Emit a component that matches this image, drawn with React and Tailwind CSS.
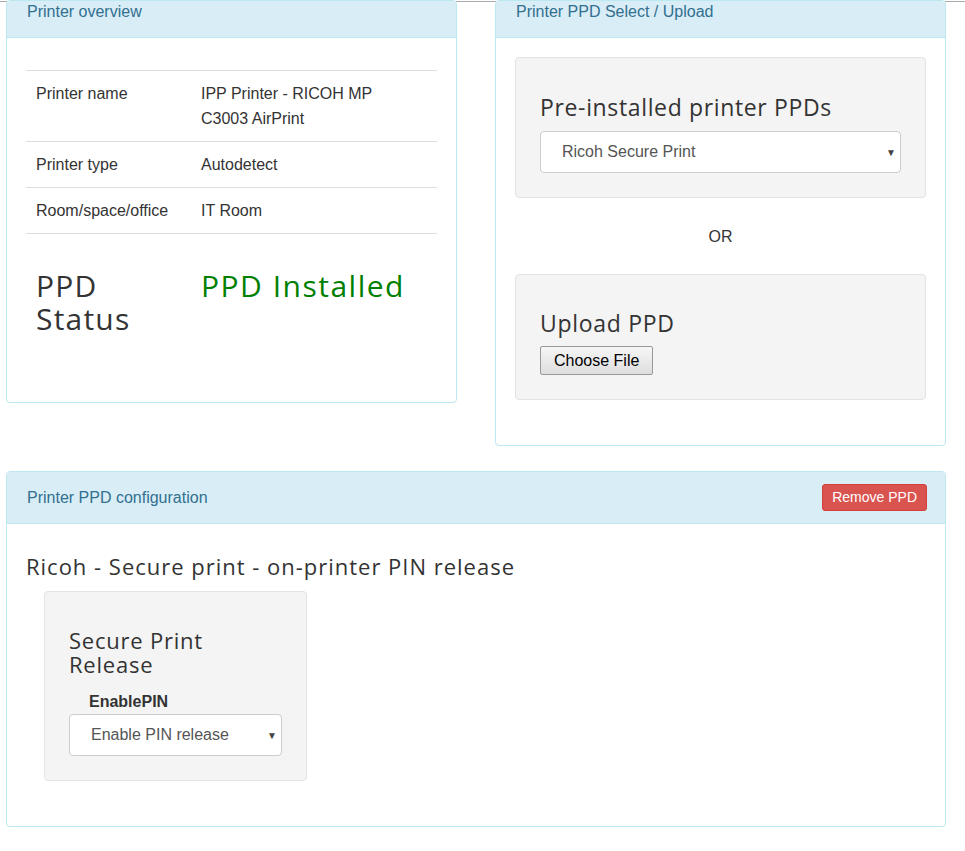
import React from 'react';

const heading = "font-['Open_Sans',sans-serif] font-normal text-[#333]";

function Panel({ title, action, children, className = '' }) {
    return (
        <div className={`border border-[#bce8f1] rounded-[4px] bg-white ${className}`}>
            <div className="bg-[#d9edf7] border-b border-[#bce8f1] text-[#31708f] text-[16px] leading-[22px] pl-[20px] pr-[19px] pt-0 pb-[14px] flex items-center justify-between">
                <span>{title}</span>
                {action}
            </div>
            {children}
        </div>
    );
}

function FakeSelect({ value, className = '' }) {
    return (
        <div className={`relative h-[42px] bg-white border border-[#ccc] rounded-[4px] flex items-center pl-[21px] text-[16px] text-[#555] ${className}`}>
            <span>{value}</span>
            <span className="absolute right-[4px] top-[13px] text-[10px] text-[#444]">▼</span>
        </div>
    );
}

export default function App() {
    const rows = [
        ['Printer name', 'IPP Printer - RICOH MP C3003 AirPrint'],
        ['Printer type', 'Autodetect'],
        ['Room/space/office', 'IT Room'],
    ];

    return (
        <div className="min-h-screen bg-white font-['Liberation_Sans',Arial,sans-serif] text-[#333]">
            <div className="h-[2px] border-b border-[#aaa]" />
            <div className="w-[940px] ml-[6px] flex items-start gap-[38px]">
                {/* Printer overview */}
                <Panel title="Printer overview" className="w-[451px] -mt-[2px]">
                    <div className="px-[19px] pt-[32px] pb-[20px]">
                        <table className="w-full text-[16px] leading-[25px] border-t border-[#ddd]">
                            <tbody>
                                {rows.map(([k, v]) => (
                                    <tr key={k} className="border-b border-[#ddd]">
                                        <td className="w-[165px] px-[10px] py-[10px] align-top">{k}</td>
                                        <td className="px-[10px] py-[10px] align-top">
                                            <div className="max-w-[205px]">{v}</div>
                                        </td>
                                    </tr>
                                ))}
                                <tr>
                                    <td className="px-[10px] pt-[35px] pb-[47px] align-top">
                                        <div className={`${heading} text-[30px] leading-[33px] tracking-[0.04em]`}>PPD Status</div>
                                    </td>
                                    <td className="px-[10px] pt-[35px] pb-[47px] align-top">
                                        <div className={`${heading} text-[30px] leading-[33px] tracking-[0.05em] !text-[#008000]`}>PPD Installed</div>
                                    </td>
                                </tr>
                            </tbody>
                        </table>
                    </div>
                </Panel>

                {/* PPD select / upload */}
                <Panel title="Printer PPD Select / Upload" className="w-[451px] -mt-[2px]">
                    <div className="px-[19px] pt-[19px] pb-[45px]">
                        <div className="bg-[#f4f4f4] border border-[#e3e3e3] rounded-[4px] px-[24px] pt-[19px] pb-[24px]">
                            <h3 className={`${heading} text-[23px] leading-[26px] tracking-[0.028em] mt-[17px] mb-[11px]`}>Pre-installed printer PPDs</h3>
                            <FakeSelect value="Ricoh Secure Print" />
                        </div>
                        <div className="text-center text-[16px] leading-[22px] pt-[28px] pb-[26px]">OR</div>
                        <div className="bg-[#f4f4f4] border border-[#e3e3e3] rounded-[4px] px-[24px] pt-[19px] pb-[24px]">
                            <h3 className={`${heading} text-[23px] leading-[26px] tracking-[0.03em] mt-[16px] mb-[10px]`}>Upload PPD</h3>
                            <button className="h-[29px] px-[13px] text-[16px] text-black border border-[#999] rounded-[2px] bg-gradient-to-b from-[#f6f6f6] to-[#dedede]">
                                Choose File
                            </button>
                        </div>
                    </div>
                </Panel>
            </div>

            {/* PPD configuration */}
            <div className="w-[940px] ml-[6px] mt-[25px]">
                <div className="border border-[#bce8f1] rounded-[4px] bg-white">
                    <div className="bg-[#d9edf7] border-b border-[#bce8f1] text-[#31708f] text-[16px] h-[52px] pl-[20px] pr-[18px] flex items-center justify-between rounded-t-[4px]">
                        <span>Printer PPD configuration</span>
                        <button className="h-[27px] px-[9px] bg-[#d9534f] border border-[#d43f3a] rounded-[3px] text-white text-[14px]">
                            Remove PPD
                        </button>
                    </div>
                    <div className="px-[19px] pt-[29px] pb-[45px]">
                        <h3 className={`${heading} text-[22px] leading-[26px] tracking-[0.045em] mb-[12px]`}>Ricoh - Secure print - on-printer PIN release</h3>
                        <div className="ml-[18px] w-[263px] bg-[#f4f4f4] border border-[#e3e3e3] rounded-[4px] px-[24px] pt-[36px] pb-[24px]">
                            <h3 className={`${heading} text-[22px] leading-[24px] tracking-[0.035em] max-w-[190px] mb-[15px]`}>Secure Print Release</h3>
                            <div className="pl-[20px] text-[16px] font-bold leading-[22px] mb-[1px]">EnablePIN</div>
                            <FakeSelect value="Enable PIN release" />
                        </div>
                    </div>
                </div>
            </div>
        </div>
    );
}
